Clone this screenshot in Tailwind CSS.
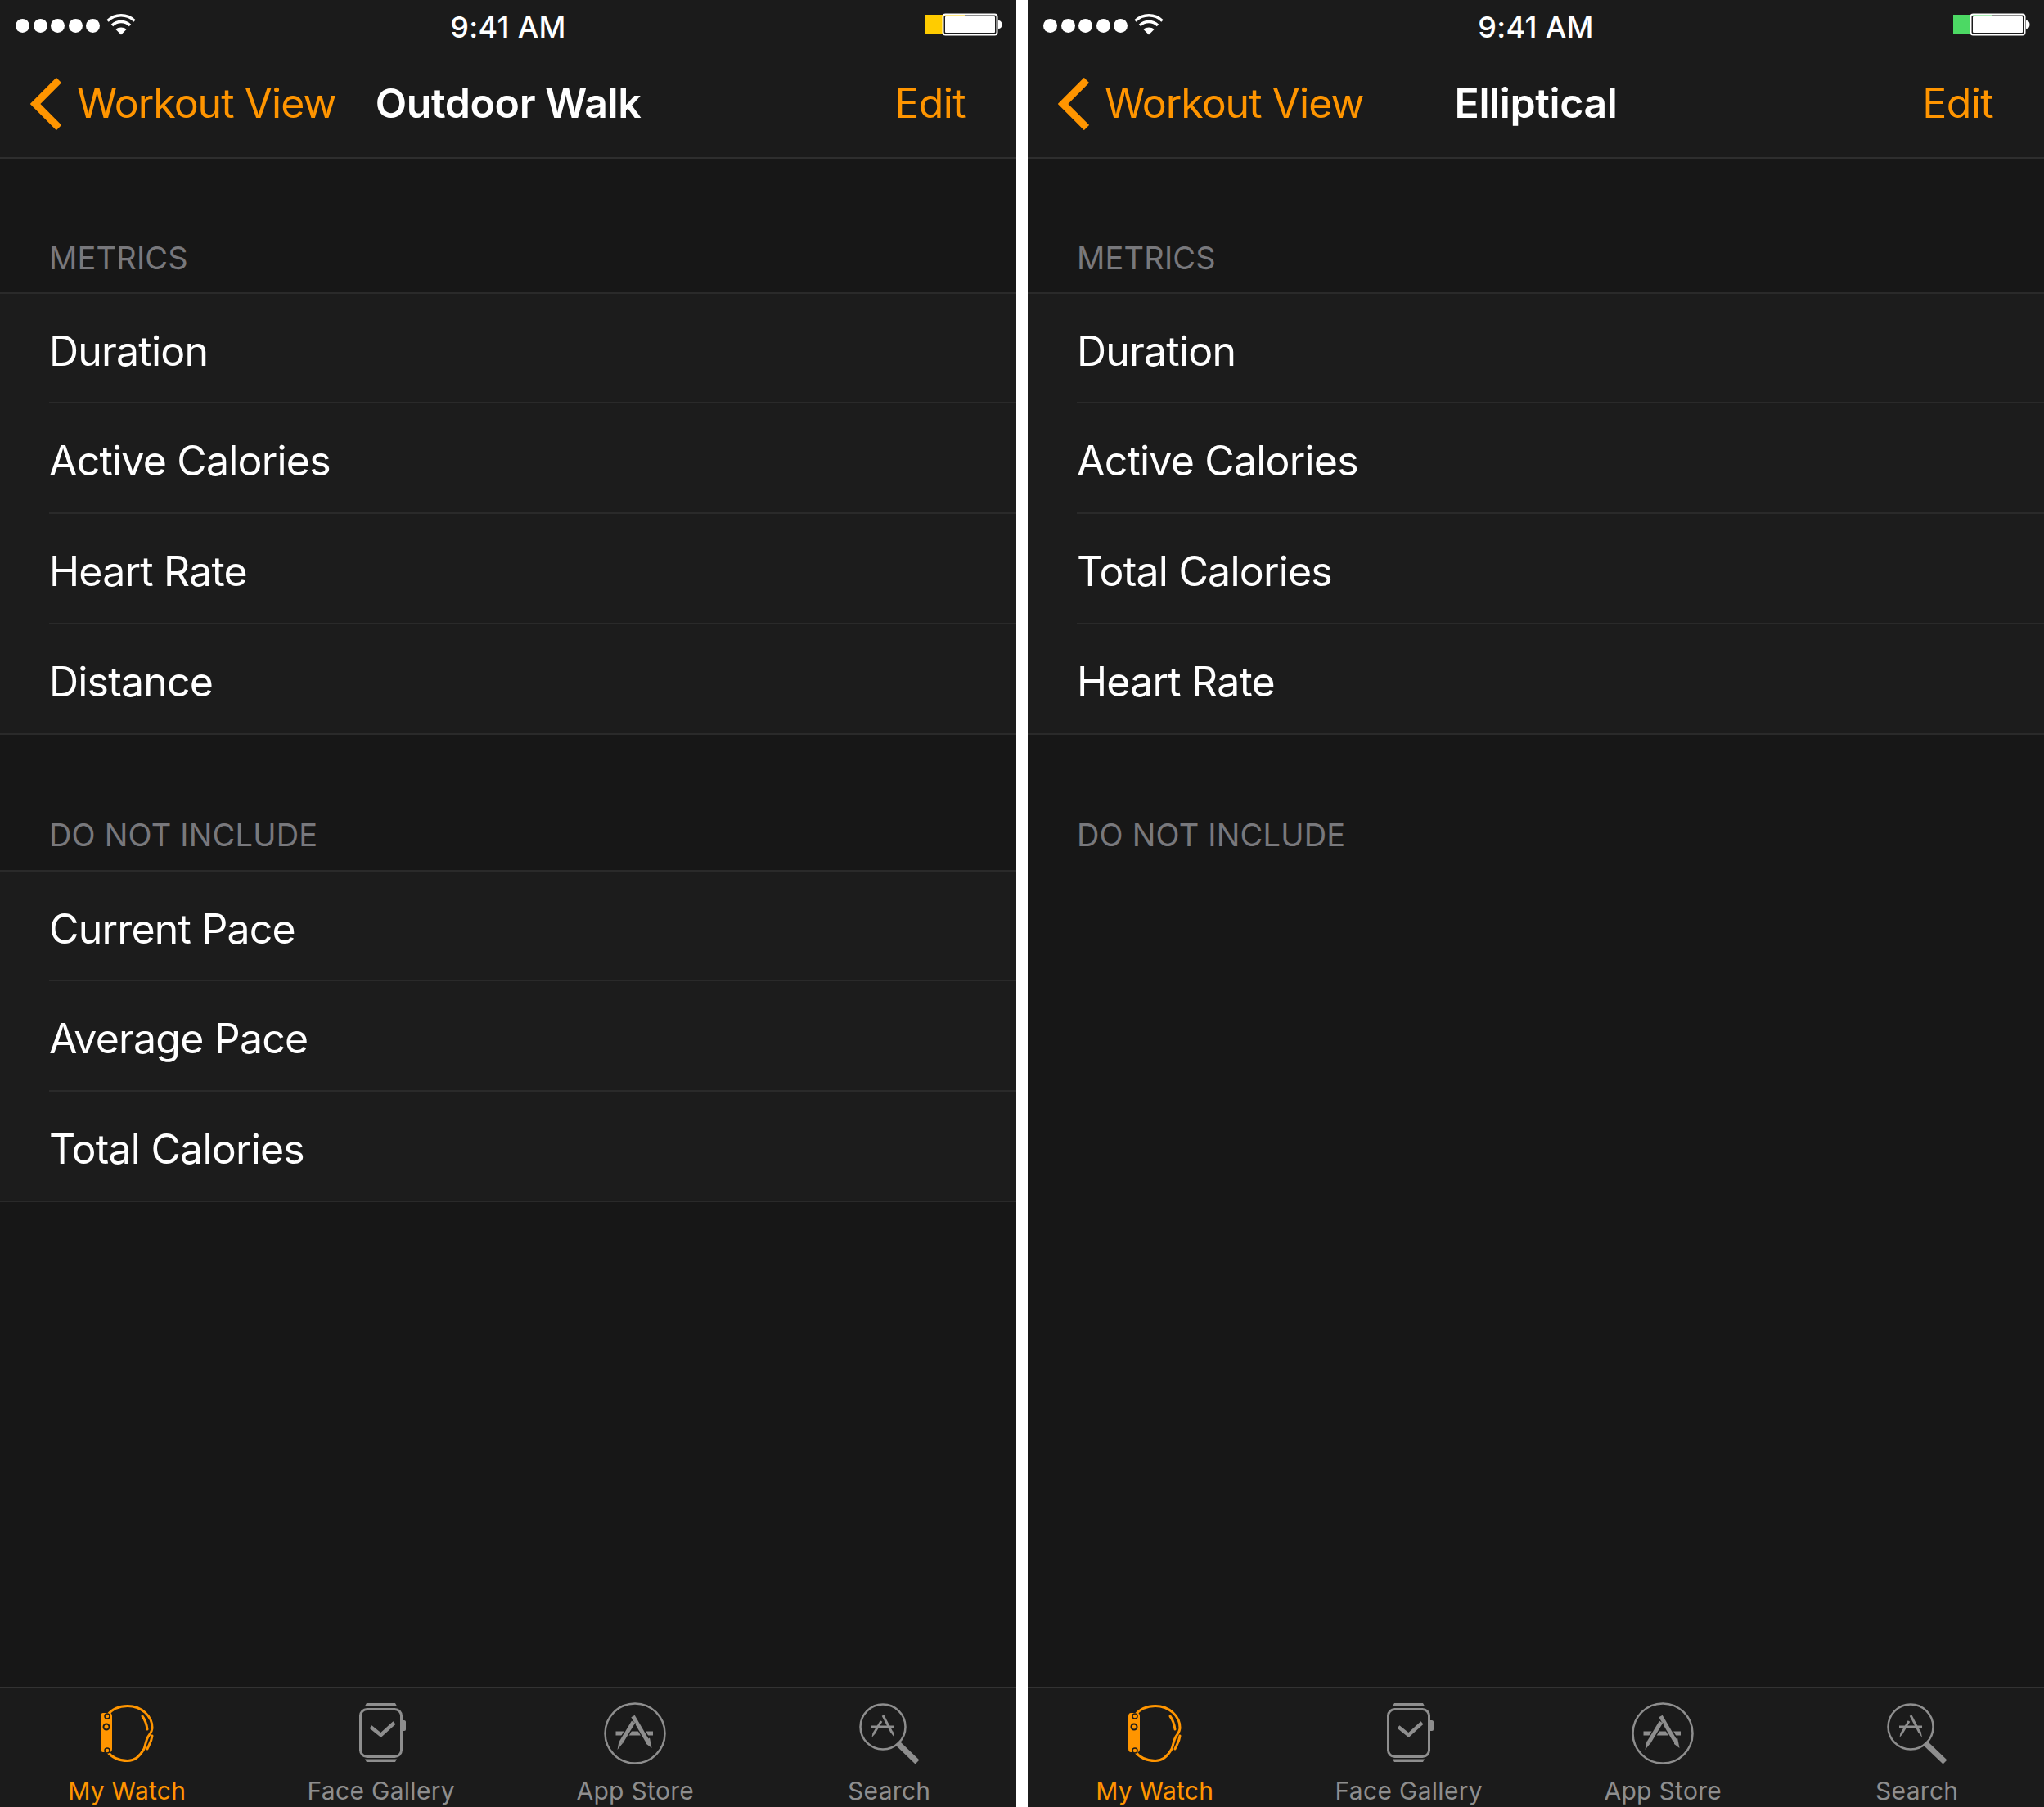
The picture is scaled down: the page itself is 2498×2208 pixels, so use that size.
<!DOCTYPE html>
<html lang="en">
<head>
  <meta charset="UTF-8" />
  <title>Workout View</title>
  <script src="https://cdn.jsdelivr.net/npm/@tailwindcss/browser@4"></script>
</head>
<body class="bg-white font-[Inter,sans-serif]">
<div class="flex gap-[14px] w-[2498px] h-[2208px]">

  <!-- left phone -->
  <div class="w-[1242px] h-[2208px] flex flex-col bg-[#171717] text-white">
    <div class="h-[194px] shrink-0 bg-[#1b1b1b] border-b-2 border-[#2e2e2e]">
      <div class="h-[60px] grid grid-cols-3 items-center">
        <div class="flex items-center pl-[19px] gap-[4.5px]">
          <i class="w-[17px] h-[17px] rounded-full bg-white"></i><i class="w-[17px] h-[17px] rounded-full bg-white"></i><i class="w-[17px] h-[17px] rounded-full bg-white"></i><i class="w-[17px] h-[17px] rounded-full bg-white"></i><i class="w-[17px] h-[17px] rounded-full bg-white"></i>
          <svg class="ml-[3px] -mt-[3px]" width="36" height="27" viewBox="0 0 36 27" fill="none" stroke="#fff" stroke-width="3.4"><path d="M1.5 9.5C10.5 .5 25.5 .5 34.5 9.5"/><path d="M7 15C13 9 23 9 29 15"/><path d="M18 26.5L11.5 20C15 16.8 21 16.8 24.5 20Z" fill="#fff" stroke="none"/></svg>
        </div>
        <div class="text-center text-[36px] font-medium pt-[4px] leading-[58px] tracking-[0.3px]">9:41 AM</div>
        <div class="flex justify-end pr-[17px]">
          <svg width="94" height="30" viewBox="0 0 94 30" fill="none"><path d="M0 2H48V3H22V25H0Z" fill="#ffcc00"/><rect x="21.5" y="1.5" width="66" height="25" rx="3" stroke="#fff" stroke-width="2"/><rect x="24" y="4" width="61" height="20" rx="1" fill="#fff"/><path d="M89 9C92 9 93.5 11 93.5 14C93.5 17 92 19 89 19Z" fill="#fff"/></svg>
        </div>
      </div>
      <div class="h-[131px] pt-[2px] grid grid-cols-[1fr_auto_1fr] items-center">
        <div class="flex items-center pl-[37px] text-[#ff9500]">
          <svg width="38" height="64" viewBox="0 0 38 64" fill="none" stroke="#ff9500" stroke-width="9"><path d="M35 3L6 32L35 61"/></svg>
          <span class="ml-[19px] text-[50px] tracking-[-1px]">Workout View</span>
        </div>
        <div class="text-[50px] font-semibold tracking-[-0.4px]">Outdoor Walk</div>
        <div class="text-right pr-[62px] text-[50px] text-[#ff9500] tracking-[-0.6px]">Edit</div>
      </div>
    </div>

    <div class="h-[165px] shrink-0 flex items-end pl-[60px] pb-[19px] text-[#78787c] text-[38px] tracking-[0.2px] leading-[46px] border-b-2 border-[#2a2a2a]">METRICS</div>
    <div class="bg-[#1c1c1c] border-b-2 border-[#2a2a2a] pl-[60px] text-[50px] tracking-[-0.8px]">
      <div class="h-[134px] pt-[8px] flex items-center border-b-2 border-[#2a2a2a]">Duration</div>
      <div class="h-[135px] pt-[8px] flex items-center border-b-2 border-[#2a2a2a]">Active Calories</div>
      <div class="h-[135px] pt-[8px] flex items-center border-b-2 border-[#2a2a2a]">Heart Rate</div>
      <div class="h-[133px] pt-[8px] flex items-center">Distance</div>
    </div>

    <div class="h-[167px] shrink-0 flex items-end pl-[60px] pb-[20px] text-[#78787c] text-[38px] tracking-[0.2px] leading-[46px] border-b-2 border-[#2a2a2a]">DO NOT INCLUDE</div>
    <div class="bg-[#1c1c1c] border-b-2 border-[#2a2a2a] pl-[60px] text-[50px] tracking-[-0.8px]">
      <div class="h-[134px] pt-[8px] flex items-center border-b-2 border-[#2a2a2a]">Current Pace</div>
      <div class="h-[135px] pt-[8px] flex items-center border-b-2 border-[#2a2a2a]">Average Pace</div>
      <div class="h-[133px] pt-[8px] flex items-center">Total Calories</div>
    </div>

    <div class="flex-1"></div>

    <div class="h-[147px] shrink-0 grid grid-cols-4 bg-[#1b1b1b] border-t-2 border-[#333] text-[30px] text-[#8e8e8e]">
      <div class="flex flex-col items-center text-[#ff9500]">
        <div class="h-[103px] pt-[20px] pl-[2px]">
          <svg width="66" height="70" viewBox="0 0 66 70" fill="none" stroke="#ff9500" stroke-width="3" stroke-linecap="round"><path d="M8 13C14 5 23 1.5 33 1.5C50 1.5 63 14 63 28C63 33 60 36 58 39C55 44 55 49 53 54C48 63 41 68.5 33 68.5C22 68.5 14 65 8 57"/><path d="M51 14C54 18 56 23 57 30"/><path d="M63 38C62 46 59 49 57 54"/><path d="M3 10H11C13 10 14 12 14 14V54C14 56 13 58 11 58H3C1 58 0 56 0 54V14C0 12 1 10 3 10Z" fill="#ff9500" stroke="none"/><circle cx="7" cy="27" r="3.5" stroke="#1b1b1b" stroke-width="2"/><circle cx="8" cy="14" r="3" fill="#ff9500" stroke="#1b1b1b" stroke-width="1.5"/><circle cx="8" cy="56" r="3" fill="#ff9500" stroke="#1b1b1b" stroke-width="1.5"/></svg>
        </div>
        <span class="tracking-[0.3px]">My Watch</span>
      </div>
      <div class="flex flex-col items-center">
        <div class="h-[103px] pt-[18px] pl-[3px]">
          <svg width="57" height="72" viewBox="0 0 57 72" fill="none" stroke="#8e8e8e" stroke-width="3"><rect x="1.5" y="7.5" width="50" height="58" rx="8"/><path d="M9 0H44L46 3.5H7Z" fill="#8e8e8e" stroke="none"/><path d="M7 68.5H46L44 72H9Z" fill="#8e8e8e" stroke="none"/><path d="M52 21H55C56.5 21 57 22 57 23V32C57 33 56.5 34 55 34H52Z" fill="#8e8e8e" stroke="none"/><path d="M14 29L26.5 39L43 24" stroke-width="4.5"/></svg>
        </div>
        <span class="tracking-[0.3px]">Face Gallery</span>
      </div>
      <div class="flex flex-col items-center">
        <div class="h-[103px] pt-[17px]">
          <svg width="76" height="76" viewBox="0 0 76 76" fill="none" stroke="#8e8e8e" stroke-width="2.5"><circle cx="38" cy="38" r="36.5"/><path d="M14.5 35.5H60V40.5H14.5Z" fill="#8e8e8e" stroke="none"/><path d="M35 16L58 55" stroke="#1b1b1b" stroke-width="8"/><path d="M35.5 17L53 47" stroke-width="5"/><path d="M52 46L56 43.5L58.5 56L52 51Z" fill="#8e8e8e" stroke="none"/><path d="M36 24L21 49" stroke="#1b1b1b" stroke-width="8"/><path d="M36 24L21 49" stroke-width="5"/><path d="M18.5 47.5L23 50L16.5 58Z" fill="#8e8e8e" stroke="none"/></svg>
        </div>
        <span class="tracking-[0.3px]">App Store</span>
      </div>
      <div class="flex flex-col items-center">
        <div class="h-[103px] pt-[18px]">
          <svg width="74" height="74" viewBox="0 0 74 74" fill="none" stroke="#8e8e8e" stroke-width="2.5"><circle cx="29" cy="29" r="27.5"/><path d="M47 49L71 72" stroke-width="7"/><path d="M15 27.5H43V31H15Z" fill="#8e8e8e" stroke="none"/><path d="M29 15L40 36" stroke-width="3"/><path d="M27 22L18 37" stroke-width="3"/><path d="M16.5 36L19.5 37.5L15.5 42Z" fill="#8e8e8e" stroke="none"/><path d="M38.5 36L41.5 34.5L43 42Z" fill="#8e8e8e" stroke="none"/></svg>
        </div>
        <span class="tracking-[0.3px]">Search</span>
      </div>
    </div>
  </div>

  <!-- right phone -->
  <div class="w-[1242px] h-[2208px] flex flex-col bg-[#171717] text-white">
    <div class="h-[194px] shrink-0 bg-[#1b1b1b] border-b-2 border-[#2e2e2e]">
      <div class="h-[60px] grid grid-cols-3 items-center">
        <div class="flex items-center pl-[19px] gap-[4.5px]">
          <i class="w-[17px] h-[17px] rounded-full bg-white"></i><i class="w-[17px] h-[17px] rounded-full bg-white"></i><i class="w-[17px] h-[17px] rounded-full bg-white"></i><i class="w-[17px] h-[17px] rounded-full bg-white"></i><i class="w-[17px] h-[17px] rounded-full bg-white"></i>
          <svg class="ml-[3px] -mt-[3px]" width="36" height="27" viewBox="0 0 36 27" fill="none" stroke="#fff" stroke-width="3.4"><path d="M1.5 9.5C10.5 .5 25.5 .5 34.5 9.5"/><path d="M7 15C13 9 23 9 29 15"/><path d="M18 26.5L11.5 20C15 16.8 21 16.8 24.5 20Z" fill="#fff" stroke="none"/></svg>
        </div>
        <div class="text-center text-[36px] font-medium pt-[4px] leading-[58px] tracking-[0.3px]">9:41 AM</div>
        <div class="flex justify-end pr-[17px]">
          <svg width="94" height="30" viewBox="0 0 94 30" fill="none"><path d="M0 2H48V3H22V25H0Z" fill="#4cd964"/><rect x="21.5" y="1.5" width="66" height="25" rx="3" stroke="#fff" stroke-width="2"/><rect x="24" y="4" width="61" height="20" rx="1" fill="#fff"/><path d="M89 9C92 9 93.5 11 93.5 14C93.5 17 92 19 89 19Z" fill="#fff"/></svg>
        </div>
      </div>
      <div class="h-[131px] pt-[2px] grid grid-cols-[1fr_auto_1fr] items-center">
        <div class="flex items-center pl-[37px] text-[#ff9500]">
          <svg width="38" height="64" viewBox="0 0 38 64" fill="none" stroke="#ff9500" stroke-width="9"><path d="M35 3L6 32L35 61"/></svg>
          <span class="ml-[19px] text-[50px] tracking-[-1px]">Workout View</span>
        </div>
        <div class="text-[50px] font-semibold tracking-[-0.4px]">Elliptical</div>
        <div class="text-right pr-[62px] text-[50px] text-[#ff9500] tracking-[-0.6px]">Edit</div>
      </div>
    </div>

    <div class="h-[165px] shrink-0 flex items-end pl-[60px] pb-[19px] text-[#78787c] text-[38px] tracking-[0.2px] leading-[46px] border-b-2 border-[#2a2a2a]">METRICS</div>
    <div class="bg-[#1c1c1c] border-b-2 border-[#2a2a2a] pl-[60px] text-[50px] tracking-[-0.8px]">
      <div class="h-[134px] pt-[8px] flex items-center border-b-2 border-[#2a2a2a]">Duration</div>
      <div class="h-[135px] pt-[8px] flex items-center border-b-2 border-[#2a2a2a]">Active Calories</div>
      <div class="h-[135px] pt-[8px] flex items-center border-b-2 border-[#2a2a2a]">Total Calories</div>
      <div class="h-[133px] pt-[8px] flex items-center">Heart Rate</div>
    </div>

    <div class="h-[167px] shrink-0 flex items-end pl-[60px] pb-[20px] text-[#78787c] text-[38px] tracking-[0.2px] leading-[46px] border-b-2 border-transparent">DO NOT INCLUDE</div>

    <div class="flex-1"></div>

    <div class="h-[147px] shrink-0 grid grid-cols-4 bg-[#1b1b1b] border-t-2 border-[#333] text-[30px] text-[#8e8e8e]">
      <div class="flex flex-col items-center text-[#ff9500]">
        <div class="h-[103px] pt-[20px] pl-[2px]">
          <svg width="66" height="70" viewBox="0 0 66 70" fill="none" stroke="#ff9500" stroke-width="3" stroke-linecap="round"><path d="M8 13C14 5 23 1.5 33 1.5C50 1.5 63 14 63 28C63 33 60 36 58 39C55 44 55 49 53 54C48 63 41 68.5 33 68.5C22 68.5 14 65 8 57"/><path d="M51 14C54 18 56 23 57 30"/><path d="M63 38C62 46 59 49 57 54"/><path d="M3 10H11C13 10 14 12 14 14V54C14 56 13 58 11 58H3C1 58 0 56 0 54V14C0 12 1 10 3 10Z" fill="#ff9500" stroke="none"/><circle cx="7" cy="27" r="3.5" stroke="#1b1b1b" stroke-width="2"/><circle cx="8" cy="14" r="3" fill="#ff9500" stroke="#1b1b1b" stroke-width="1.5"/><circle cx="8" cy="56" r="3" fill="#ff9500" stroke="#1b1b1b" stroke-width="1.5"/></svg>
        </div>
        <span class="tracking-[0.3px]">My Watch</span>
      </div>
      <div class="flex flex-col items-center">
        <div class="h-[103px] pt-[18px] pl-[3px]">
          <svg width="57" height="72" viewBox="0 0 57 72" fill="none" stroke="#8e8e8e" stroke-width="3"><rect x="1.5" y="7.5" width="50" height="58" rx="8"/><path d="M9 0H44L46 3.5H7Z" fill="#8e8e8e" stroke="none"/><path d="M7 68.5H46L44 72H9Z" fill="#8e8e8e" stroke="none"/><path d="M52 21H55C56.5 21 57 22 57 23V32C57 33 56.5 34 55 34H52Z" fill="#8e8e8e" stroke="none"/><path d="M14 29L26.5 39L43 24" stroke-width="4.5"/></svg>
        </div>
        <span class="tracking-[0.3px]">Face Gallery</span>
      </div>
      <div class="flex flex-col items-center">
        <div class="h-[103px] pt-[17px]">
          <svg width="76" height="76" viewBox="0 0 76 76" fill="none" stroke="#8e8e8e" stroke-width="2.5"><circle cx="38" cy="38" r="36.5"/><path d="M14.5 35.5H60V40.5H14.5Z" fill="#8e8e8e" stroke="none"/><path d="M35 16L58 55" stroke="#1b1b1b" stroke-width="8"/><path d="M35.5 17L53 47" stroke-width="5"/><path d="M52 46L56 43.5L58.5 56L52 51Z" fill="#8e8e8e" stroke="none"/><path d="M36 24L21 49" stroke="#1b1b1b" stroke-width="8"/><path d="M36 24L21 49" stroke-width="5"/><path d="M18.5 47.5L23 50L16.5 58Z" fill="#8e8e8e" stroke="none"/></svg>
        </div>
        <span class="tracking-[0.3px]">App Store</span>
      </div>
      <div class="flex flex-col items-center">
        <div class="h-[103px] pt-[18px]">
          <svg width="74" height="74" viewBox="0 0 74 74" fill="none" stroke="#8e8e8e" stroke-width="2.5"><circle cx="29" cy="29" r="27.5"/><path d="M47 49L71 72" stroke-width="7"/><path d="M15 27.5H43V31H15Z" fill="#8e8e8e" stroke="none"/><path d="M29 15L40 36" stroke-width="3"/><path d="M27 22L18 37" stroke-width="3"/><path d="M16.5 36L19.5 37.5L15.5 42Z" fill="#8e8e8e" stroke="none"/><path d="M38.5 36L41.5 34.5L43 42Z" fill="#8e8e8e" stroke="none"/></svg>
        </div>
        <span class="tracking-[0.3px]">Search</span>
      </div>
    </div>
  </div>

</div>
</body>
</html>
